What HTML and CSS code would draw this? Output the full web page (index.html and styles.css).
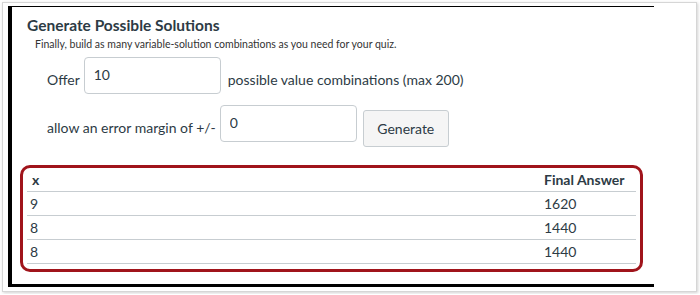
FILE: index.html
```html
<!DOCTYPE html>
<html>
<head>
<title>Generate Possible Solutions</title>
<link rel="stylesheet" href="styles.css">
</head>
<body>
<div class="frame">
  <div class="panel">
    <h2>Generate Possible Solutions</h2>
    <p class="hint">Finally, build as many variable-solution combinations as you need for your quiz.</p>

    <div class="row row-offer">
      <label class="label" for="combos">Offer</label>
      <input type="text" id="combos" class="field" value="10">
      <span class="label after">possible value combinations (max 200)</span>
    </div>

    <div class="row row-margin">
      <label class="label" for="margin">allow an error margin of +/-</label>
      <input type="text" id="margin" class="field" value="0">
      <button class="btn">Generate</button>
    </div>

    <div class="results">
      <table>
        <thead>
          <tr><th class="col-x">x</th><th>Final Answer</th></tr>
        </thead>
        <tbody>
          <tr><td>9</td><td>1620</td></tr>
          <tr><td>8</td><td>1440</td></tr>
          <tr><td>8</td><td>1440</td></tr>
        </tbody>
      </table>
    </div>
  </div>
</div>
</body>
</html>
```

FILE: styles.css
```css
body {
    margin: 0;
    background-color: #fff;
    font-family: Lato, "Open Sans", sans-serif;
    color: #2d3b45;
}

.frame {
    box-sizing: border-box;
    width: 695px;
    height: 290px;
    margin: 2px;
    border: 1px solid #d6d6d6;
    box-shadow: 1px 1px 3px rgba(0, 0, 0, 0.18);
    overflow: hidden;
}

.panel {
    width: 642px;
    height: 277px;
    margin: 3px 0 0 5px;
    border-top: 1px solid #000;
    border-left: 4px solid #000;
    border-bottom: 3px solid #000;
}

h2 {
    margin: 8px 0 0 15px;
    font-size: 15.5px;
    line-height: 20px;
    font-weight: 700;
}

.hint {
    margin: 2px 0 0 23px;
    font-size: 10.5px;
    line-height: 14px;
    color: #333;
}

.row {
    display: flex;
    align-items: flex-start;
    padding-left: 35px;
}

.row-offer {
    margin-top: 6px;
}

.row-margin {
    margin-top: 11px;
}

.label {
    margin-top: 13px;
    font-size: 14px;
    line-height: 20px;
    white-space: nowrap;
}

.after {
    margin-left: 7px;
}

.field {
    box-sizing: border-box;
    width: 137px;
    height: 37px;
    margin-left: 4px;
    padding: 0 9px 3px;
    border: 1px solid #c7cdd1;
    border-radius: 4px;
    font-family: inherit;
    font-size: 14px;
    color: #2d3b45;
}

.btn {
    box-sizing: border-box;
    width: 86px;
    height: 37px;
    margin: 5px 0 0 6px;
    border: 1px solid #c7cdd1;
    border-radius: 3px;
    background-color: #f5f5f5;
    font-family: inherit;
    font-size: 14px;
    color: #2d3b45;
}

.results {
    box-sizing: border-box;
    width: 623px;
    margin: 18px 0 0 8px;
    padding: 0 4px 5px;
    border: 3px solid #a0141b;
    border-radius: 10px;
}

table {
    width: 100%;
    border-collapse: collapse;
    font-size: 14px;
}

th, td {
    height: 23px;
    padding: 0 5px 0 3px;
    text-align: left;
    white-space: nowrap;
    border-bottom: 1px solid #c7cdd1;
}

.col-x {
    width: 504px;
    padding-left: 5px;
}
```
